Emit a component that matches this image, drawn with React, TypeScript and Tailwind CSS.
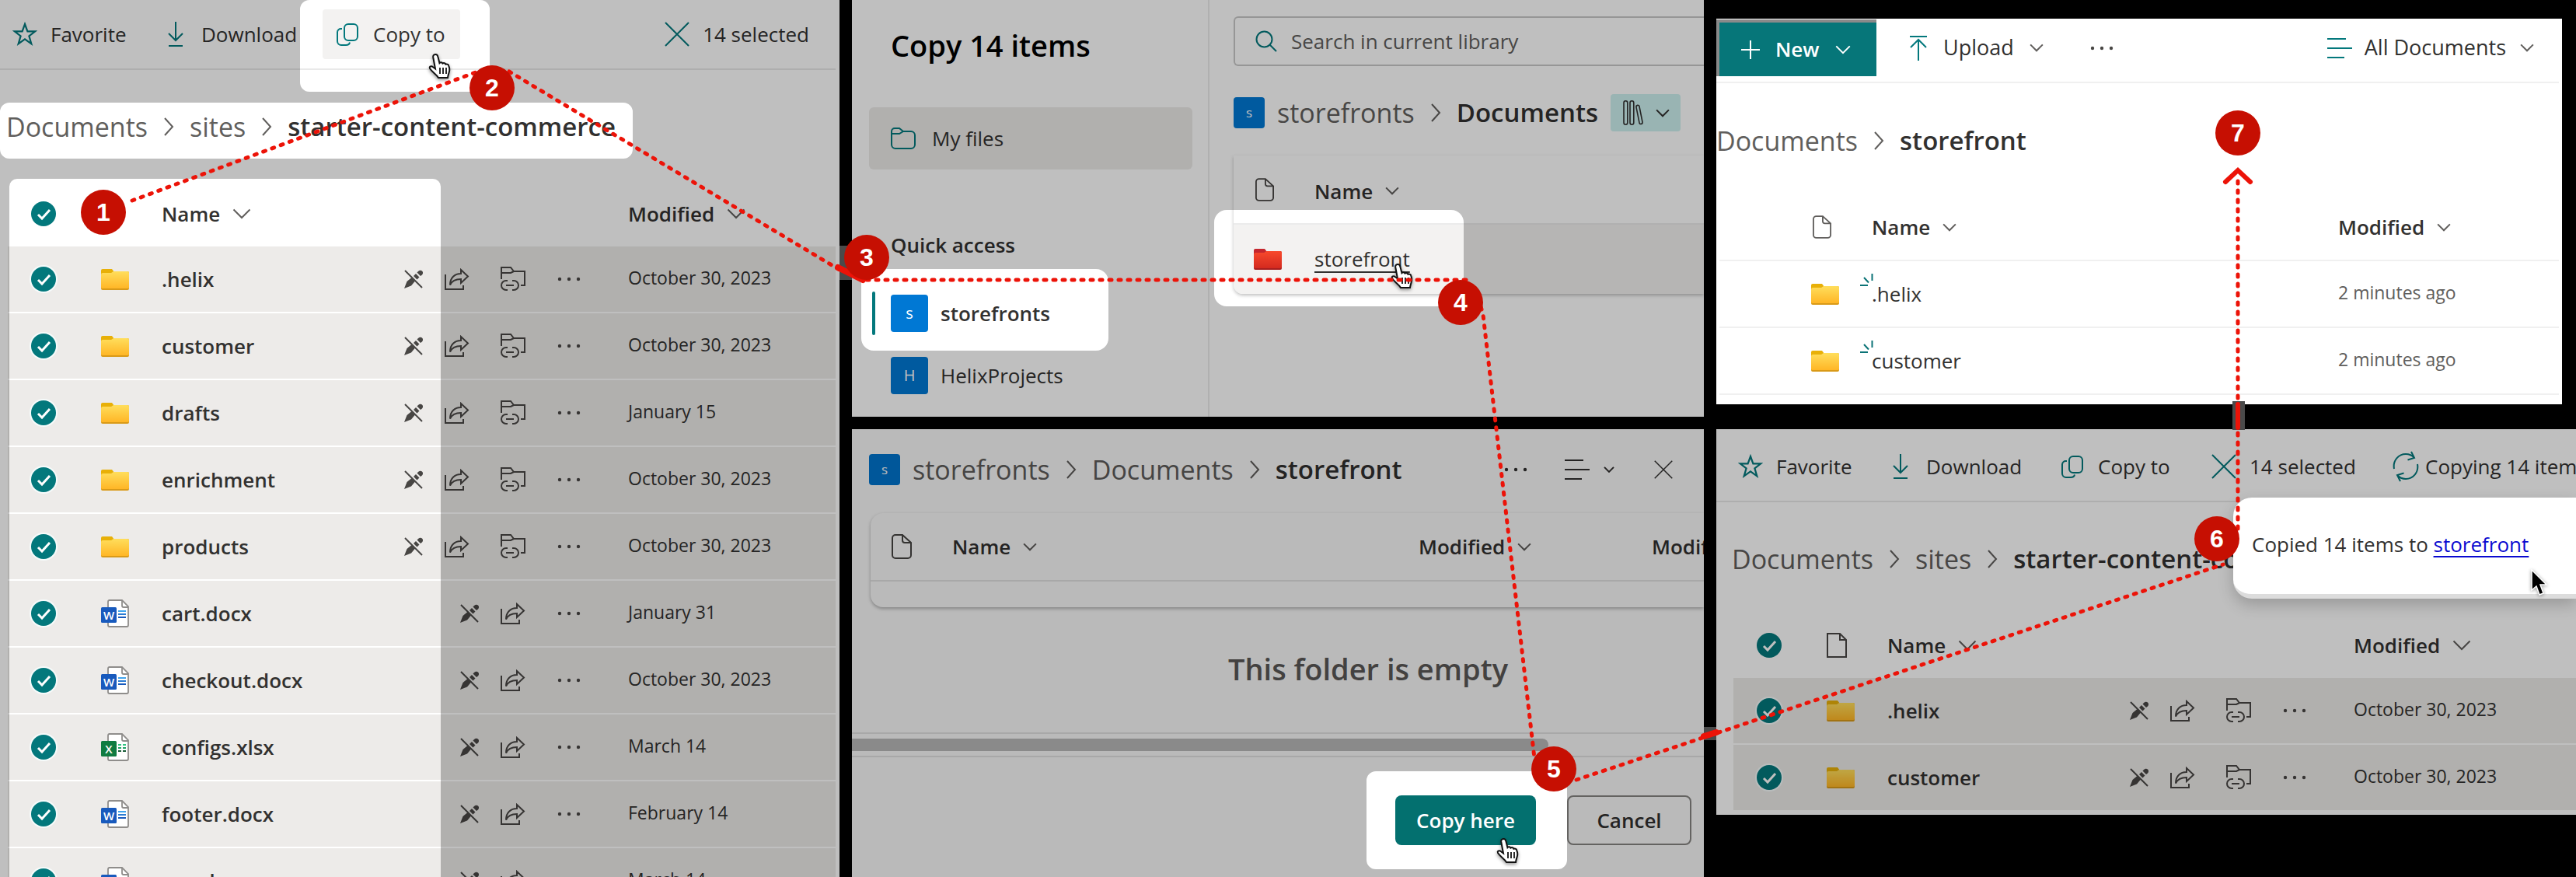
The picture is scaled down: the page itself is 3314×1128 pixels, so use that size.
import React from "react";

type IconProps = { className?: string };

/* ---------- icons ---------- */

const stroke = {
  fill: "none",
  stroke: "currentColor",
  strokeWidth: 2,
} as const;

function StarIcon({ className = "" }: IconProps) {
  return (
    <svg viewBox="0 0 32 32" className={className} {...stroke}>
      <path d="M16 3l3.400 9.300h9.800l-7.800 6 2.900 10L16 22.400 7.700 28.300l2.900-10-7.800-6h9.800z" strokeWidth="2.200" />
    </svg>
  );
}
function DownloadIcon({ className = "" }: IconProps) {
  return (
    <svg viewBox="0 0 32 32" className={className} {...stroke}>
      <path d="M16 0v24M7 15l9 9 9-9M7 31h18" />
    </svg>
  );
}
function UploadIcon({ className = "" }: IconProps) {
  return (
    <svg viewBox="0 0 32 32" className={className} {...stroke}>
      <path d="M16 32V5M6 15l10-10 10 10M5 1h22" />
    </svg>
  );
}
function CopyIcon({ className = "" }: IconProps) {
  return (
    <svg viewBox="0 0 32 32" className={className} {...stroke}>
      <rect x="12" y="3" width="17" height="21" rx="5" />
      <path d="M9 9H8a4.500 4.500 0 0 0-5 4.500V25a5 5 0 0 0 5 5h6c3 0 4.500-1 5-3.500" />
    </svg>
  );
}
function CloseIcon({ className = "" }: IconProps) {
  return (
    <svg viewBox="0 0 32 32" className={className} {...stroke}>
      <path d="M1 1l30 30M31 1L1 31" />
    </svg>
  );
}
function SyncIcon({ className = "" }: IconProps) {
  return (
    <svg viewBox="0 0 34 40" className={className} {...stroke}>
      <path d="M2 23C0 12 8 4 17 4c4 0 8 1.500 11 5M24 1l4 8-8.500 2.500" />
      <path d="M32 17c2 11-6 19-15 19-4 0-8-1.500-11-5M10 39l-4-8 8.500-2.500" />
    </svg>
  );
}
function SearchIcon({ className = "" }: IconProps) {
  return (
    <svg viewBox="0 0 28 28" className={className} {...stroke}>
      <circle cx="11.500" cy="11.500" r="10" />
      <path d="M18.500 18.500L27 27" />
    </svg>
  );
}
function ChevronDown({ className = "" }: IconProps) {
  return (
    <svg viewBox="0 0 24 14" className={className} {...stroke}>
      <path d="M1.500 1.500L12 12 22.500 1.500" vectorEffect="non-scaling-stroke" />
    </svg>
  );
}
function ChevronRight({ className = "" }: IconProps) {
  return (
    <svg viewBox="0 0 14 24" className={className} {...stroke}>
      <path d="M2 1l10 11L2 23" vectorEffect="non-scaling-stroke" />
    </svg>
  );
}
function ListIcon({ className = "" }: IconProps) {
  return (
    <svg viewBox="0 0 32 28" className={className} {...stroke}>
      <path d="M0 2h24M0 14h32M0 26h22" />
    </svg>
  );
}
function DotsIcon({ className = "" }: IconProps) {
  return (
    <svg viewBox="0 0 30 8" className={className} fill="currentColor">
      <circle cx="3" cy="4" r="2.200" />
      <circle cx="15" cy="4" r="2.200" />
      <circle cx="27" cy="4" r="2.200" />
    </svg>
  );
}
function PlusIcon({ className = "" }: IconProps) {
  return (
    <svg viewBox="0 0 24 24" className={className} {...stroke}>
      <path d="M12 0v24M0 12h24" />
    </svg>
  );
}
function DocIcon({ className = "" }: IconProps) {
  return (
    <svg viewBox="0 0 26 32" className={className} {...stroke}>
      <path d="M5 1h9l11 10v16a4 4 0 0 1-4 4H5a4 4 0 0 1-4-4V5a4 4 0 0 1 4-4zM14 1v7a3 3 0 0 0 3 3h8" />
    </svg>
  );
}
function SheetIcon({ className = "" }: IconProps) {
  return (
    <svg viewBox="0 0 26 32" className={className} {...stroke}>
      <path d="M1 1h16l8 8v22H1zM17 1v8h8" />
    </svg>
  );
}
function OutlineFolder({ className = "" }: IconProps) {
  return (
    <svg viewBox="0 0 32 28" className={className} {...stroke}>
      <path d="M1 8V5a4 4 0 0 1 4-4h6l5 4h10a5 5 0 0 1 5 5v12a5 5 0 0 1-5 5H6a5 5 0 0 1-5-5zM1 8h10l5-3" />
    </svg>
  );
}
function BooksIcon({ className = "" }: IconProps) {
  return (
    <svg viewBox="0 0 34 40" className={className} {...stroke}>
      <rect x="2" y="1" width="6" height="38" rx="3" />
      <rect x="12" y="1" width="6" height="38" rx="3" />
      <path d="M22 11c-.5-3.500 4.500-4.200 5-1l5 25c.5 3.500-4.500 4.500-5 1z" />
    </svg>
  );
}
function PencilOff({ className = "" }: IconProps) {
  return (
    <svg viewBox="0 0 24 24" className={className}>
      <path
        d="M0 24l3.500-9 6-5 4.500 4.500-5 6zM12 8l3-3 4.500 4.500-3 3zM16.500 3.500L18 2c4-3.500 8 1 5 4.500l-2 1.500z"
        fill="currentColor"
      />
      <path d="M1 1l22 22" stroke="currentColor" strokeWidth="2" />
    </svg>
  );
}
function ShareIcon({ className = "" }: IconProps) {
  return (
    <svg viewBox="0 0 32 28" className={className} {...stroke}>
      <path d="M1 8v19h23v-5" />
      <path d="M21 2l9 8.500-9 8.500v-5C13 14 9 17 7 21.500 7 12 13 7 21 7z" />
    </svg>
  );
}
function FolderLink({ className = "" }: IconProps) {
  return (
    <svg viewBox="0 0 32 32" className={className} {...stroke}>
      <path d="M1 16V1h12l4 5h14v18h-5M1 8h12l4-2" />
      <path d="M9 18H7a6 6 0 0 0 0 12h2M15 18h2a6 6 0 0 1 0 12h-2M7 24h10" />
    </svg>
  );
}
function Folder({ tone = "yellow" }: { tone?: "yellow" | "red" }) {
  const id = "folder-" + tone;
  const [back, top, bottom, base] =
    tone === "yellow"
      ? ["#e8b008", "#ffde5c", "#ffb626", "#d99a18"]
      : ["#c4262e", "#f8492c", "#d42a1f", "#a81e1e"];
  return (
    <svg viewBox="0 0 36 27" className="block h-[27px] w-9">
      <defs>
        <linearGradient id={id} x1="0" y1="0" x2="0" y2="1">
          <stop offset="0" stopColor={top} />
          <stop offset="1" stopColor={bottom} />
        </linearGradient>
      </defs>
      <path d="M2 0h12l3 4v6H0V2a2 2 0 0 1 2-2z" fill={back} />
      <path d="M0 7q0-2 2-2h11l3-2h18q2 0 2 2v20q0 2-2 2H2q-2 0-2-2z" fill={base} />
      <path d="M0 7q0-2 2-2h11l3-2h18q2 0 2 2v19q0 1-2 1H2q-2 0-2-1z" fill={`url(#${id})`} />
    </svg>
  );
}
function OfficeFile({ kind }: { kind: "word" | "excel" }) {
  return (
    <svg viewBox="0 0 36 36" className="block h-9 w-9">
      <path d="M10 1h17l8 8v24a2 2 0 0 1-2 2H11a2 2 0 0 1-2-2V3q0-2 2-2z" fill="#fff" stroke="#8f8d8b" strokeWidth="1.800" />
      <path d="M27 1v7q0 2 2 2h6" fill="none" stroke="#8f8d8b" strokeWidth="1.800" />
      {kind === "word" ? (
        <g strokeWidth="2">
          <path d="M22 15h10" stroke="#41a5ee" />
          <path d="M22 19h10" stroke="#2b7cd3" />
          <path d="M22 23h10" stroke="#185abd" />
        </g>
      ) : (
        <g strokeWidth="2" strokeDasharray="4 2">
          <path d="M22 15h10" stroke="#33c481" />
          <path d="M22 19h10" stroke="#21a366" />
          <path d="M22 23h10" stroke="#185c37" />
        </g>
      )}
      <rect x="0" y="10" width="20" height="20" rx="1.500" fill={kind === "word" ? "#185abd" : "#107c41"} />
      <text x="10" y="25.500" textAnchor="middle" fontSize="15" fontWeight="600" fill="#fff">
        {kind === "word" ? "W" : "X"}
      </text>
    </svg>
  );
}
function Sparkle() {
  return (
    <svg viewBox="0 0 17 16" className="absolute -left-[15px] -top-2 h-4 w-[17px]" stroke="#0b7376" strokeWidth="2">
      <path d="M0 15h10M5 5l6 6.500M15.500 0v9" />
    </svg>
  );
}
function HandCursor({ className = "" }: IconProps) {
  return (
    <svg viewBox="0 0 32 34" className={"absolute h-[34px] w-8 drop-shadow-[0_2px_2px_rgba(0,0,0,0.4)] " + className}>
      <path
        d="M10 2c2-.2 3 1 3.400 3l2 8c1-1.200 3.200-1 4 .6 1.500-1 3.500-.4 4 1.200 2-.6 3.600.3 4 2.200l.8 3c.8 4-1.700 6.500-2.200 12H14C11.500 27.500 6 25 3 20c-1-2 1-3.500 3-2.500l4 3L7.200 5.500C6.900 3.500 8 2.200 10 2z"
        fill="#fff"
        stroke="#111"
        strokeWidth="2"
      />
      <path d="M16 19v8M20 19v8M24 19v8" stroke="#111" strokeWidth="1.800" />
    </svg>
  );
}

/* ---------- shared parts ---------- */

function ToolButton({ icon, label, className = "" }: { icon: React.ReactNode; label: string; className?: string }) {
  return (
    <button type="button" className={"flex shrink-0 items-center gap-[17px] whitespace-nowrap text-left text-[26px] " + className}>
      <span className="flex w-8 shrink-0 justify-center text-[#03787c]">{icon}</span>
      {label}
    </button>
  );
}

function Breadcrumb({ path, current, className = "" }: { path: string[]; current: string; className?: string }) {
  return (
    <nav aria-label="Breadcrumb" className={"flex items-center gap-5 whitespace-nowrap leading-[44px] " + className}>
      {path.map((p) => (
        <React.Fragment key={p}>
          <a href="#" className="text-[34px] text-[#605e5c]">{p}</a>
          <ChevronRight className="h-6 w-[14px] shrink-0 text-[#605e5c]" />
        </React.Fragment>
      ))}
      <a href="#" aria-current="page" className="text-[33px] font-semibold">{current}</a>
    </nav>
  );
}

function SortHeader({ label, small = false }: { label: string; small?: boolean }) {
  return (
    <button type="button" className="flex items-center gap-4 text-[26px] font-semibold leading-9">
      {label}
      <ChevronDown className={small ? "h-[11px] w-[18px] text-[#605e5c]" : "h-[14px] w-6 text-[#605e5c]"} />
    </button>
  );
}

function Check({ label, ring = false }: { label: string; ring?: boolean }) {
  return (
    <label className="relative ml-[30px] block h-8 w-8">
      <input
        type="checkbox"
        defaultChecked
        aria-label={label}
        className={
          "block h-8 w-8 appearance-none rounded-full bg-[#03787c] " + (ring ? "ring-2 ring-[#f6fbfb]" : "")
        }
      />
      <svg viewBox="0 0 32 32" className="pointer-events-none absolute inset-0" fill="none" stroke="#fff" strokeWidth="3">
        <path d="M9 17l5 5 10-11" />
      </svg>
    </label>
  );
}

function SiteTile({ letter, className = "" }: { letter: string; className?: string }) {
  return (
    <span className={"flex shrink-0 items-center justify-center rounded bg-[#0078d4] text-white " + className}>{letter}</span>
  );
}

type FileItem = { name: string; kind: "folder" | "word" | "excel"; date: string };

function Action({ label, wide = true, children }: { label: string; wide?: boolean; children: React.ReactNode }) {
  return (
    <button type="button" aria-label={label} className={"flex justify-center text-[#484644] " + (wide ? "w-[72px]" : "w-10")}>
      {children}
    </button>
  );
}

function FileTable({ files, iconHeader, headClass }: { files: FileItem[]; iconHeader: boolean; headClass: string }) {
  return (
    <table className="w-full table-fixed border-separate border-spacing-0 text-left">
      <colgroup>
        <col className="w-[120px]" />
        <col className="w-[78px]" />
        <col className="w-[292px]" />
        <col className="w-[308px]" />
        <col />
      </colgroup>
      <thead>
        <tr>
          <th className={headClass}><Check label="Select all" /></th>
          <th className={headClass}>{iconHeader && <SheetIcon className="h-8 w-[26px] text-[#484644]" />}</th>
          <th className={headClass}><SortHeader label="Name" /></th>
          <th className={headClass} />
          <th className={headClass}><SortHeader label="Modified" /></th>
        </tr>
      </thead>
      <tbody>
        {files.map((f) => (
          <tr key={f.name} className="[&>td]:h-[86px] [&>td]:border-b-2 [&>td]:border-white [&>td]:bg-[#edebe9] [&>td]:align-middle">
            <td><Check label={f.name} ring /></td>
            <td>{f.kind === "folder" ? <Folder /> : <OfficeFile kind={f.kind} />}</td>
            <td className="text-[26px] font-semibold leading-9">{f.name}</td>
            <td>
              <div className="flex items-center justify-end pr-10">
                <Action label="Editing off" wide={false}><PencilOff className="h-6 w-6" /></Action>
                <Action label="Share"><ShareIcon className="h-7 w-8" /></Action>
                {f.kind === "folder" && <Action label="Add shortcut"><FolderLink className="h-8 w-8" /></Action>}
                <Action label="More"><DotsIcon className="h-2 w-[30px]" /></Action>
              </div>
            </td>
            <td className="pb-1 text-[23px] leading-8">{f.date}</td>
          </tr>
        ))}
      </tbody>
    </table>
  );
}

const files: FileItem[] = [
  { name: ".helix", kind: "folder", date: "October 30, 2023" },
  { name: "customer", kind: "folder", date: "October 30, 2023" },
  { name: "drafts", kind: "folder", date: "January 15" },
  { name: "enrichment", kind: "folder", date: "October 30, 2023" },
  { name: "products", kind: "folder", date: "October 30, 2023" },
  { name: "cart.docx", kind: "word", date: "January 31" },
  { name: "checkout.docx", kind: "word", date: "October 30, 2023" },
  { name: "configs.xlsx", kind: "excel", date: "March 14" },
  { name: "footer.docx", kind: "word", date: "February 14" },
  { name: "nav.docx", kind: "word", date: "March 14" },
];

/* ---------- panels ---------- */

function SourcePanel() {
  return (
    <section className="relative overflow-hidden bg-white">
      <div className="mr-[5px] flex h-[90px] items-center border-b-2 border-[#e9e9e9] pl-4 pr-[34px]">
        <ToolButton icon={<StarIcon className="h-8 w-8" />} label="Favorite" className="w-[194px]" />
        <ToolButton icon={<DownloadIcon className="h-8 w-8" />} label="Download" className="w-[205px]" />
        <ToolButton
          icon={<CopyIcon className="h-8 w-8" />}
          label="Copy to"
          className="h-16 w-[177px] rounded bg-[#f3f2f1] px-4"
        />
        <ToolButton icon={<CloseIcon className="h-8 w-8" />} label="14 selected" className="ml-auto" />
      </div>
      <Breadcrumb path={["Documents", "sites"]} current="starter-content-commerce" className="mt-[51px] pl-2" />
      <div className="ml-[10px] mr-[5px] mt-[48px]">
        <FileTable files={files} iconHeader={false} headClass="h-[84px]" />
      </div>
      <HandCursor className="left-[550px] top-[68px]" />
    </section>
  );
}

function PickerPanel() {
  return (
    <section className="relative flex h-[536px] overflow-hidden bg-white">
      <aside className="w-[460px] shrink-0 border-r-2 border-[#ebebeb] pl-[22px] pr-5">
        <h2 className="mt-[33px] pl-7 text-[38px] font-semibold leading-[50px] text-black">Copy 14 items</h2>
        <a href="#" className="mt-[55px] flex h-20 items-center gap-[21px] rounded-md bg-[#edebe9] pl-7 text-[26px]">
          <OutlineFolder className="h-7 w-8 text-[#03787c]" />
          My files
        </a>
        <h3 className="mt-[79px] pl-7 text-[26px] font-semibold leading-9">Quick access</h3>
        <a href="#" className="mt-[42px] flex h-14 items-center text-[26px] font-semibold">
          <span className="ml-1 mr-5 h-14 w-1 shrink-0 rounded bg-[#03787c]" />
          <SiteTile letter="s" className="h-12 w-12 text-[20px] font-normal" />
          <span className="ml-4">storefronts</span>
        </a>
        <a href="#" className="mt-6 flex h-14 items-center gap-4 pl-7 text-[26px]">
          <SiteTile letter="H" className="h-12 w-12 text-[20px]" />
          HelixProjects
        </a>
      </aside>
      <div className="min-w-0 flex-1 pl-[31px]">
        <label className="mt-[21px] flex h-16 items-center gap-[18px] rounded-l-md border-2 border-r-0 border-[#c8c8c8] pl-[26px]">
          <SearchIcon className="h-7 w-7 shrink-0 text-[#03787c]" />
          <input
            type="text"
            aria-label="Search"
            placeholder="Search in current library"
            className="min-w-0 flex-1 bg-transparent text-[26px] outline-none placeholder:text-[#605e5c] placeholder:opacity-100"
          />
        </label>
        <div className="mt-9 flex h-12 items-center">
          <SiteTile letter="s" className="h-10 w-10 text-[17px]" />
          <Breadcrumb path={["storefronts"]} current="Documents" className="ml-4" />
          <button type="button" aria-label="Choose library" className="ml-4 flex h-12 w-[90px] shrink-0 items-center gap-3 rounded bg-[#cdf0ef] pl-3">
            <BooksIcon className="h-8 w-[34px]" />
            <ChevronDown className="h-[11px] w-[18px]" />
          </button>
        </div>
        <div className="mt-[31px] h-[178px] overflow-hidden rounded-bl-xl shadow-[0_2px_4px_rgba(0,0,0,0.25)]">
          <table className="w-full table-fixed border-separate border-spacing-0 text-left">
            <colgroup>
              <col className="w-[104px]" />
              <col />
            </colgroup>
            <thead>
              <tr>
                <th className="h-[89px] border-b-2 border-[#ebebeb] pl-7"><DocIcon className="h-8 w-6 text-[#484644]" /></th>
                <th className="h-[89px] border-b-2 border-[#ebebeb] pt-1"><SortHeader label="Name" small /></th>
              </tr>
            </thead>
            <tbody>
              <tr className="bg-[#f3f2f1]">
                <td className="h-[89px] pl-[26px]"><Folder tone="red" /></td>
                <td className="h-[89px]">
                  <a href="#" className="text-[26px] underline decoration-2 underline-offset-[6px]">storefront</a>
                </td>
              </tr>
            </tbody>
          </table>
        </div>
      </div>
      <HandCursor className="left-[692px] top-[338px]" />
    </section>
  );
}

function DestinationPanel() {
  return (
    <section className="relative flex flex-1 flex-col overflow-hidden bg-white">
      <div className="mt-6 flex h-14 items-center pl-[22px] pr-10">
        <SiteTile letter="s" className="h-10 w-10 text-[17px]" />
        <Breadcrumb path={["storefronts", "Documents"]} current="storefront" className="ml-4" />
        <button type="button" aria-label="More" className="ml-auto"><DotsIcon className="h-2 w-[30px]" /></button>
        <button type="button" aria-label="View options" className="ml-12 flex items-center gap-[18px]">
          <ListIcon className="h-7 w-8" />
          <ChevronDown className="h-2 w-[14px]" />
        </button>
        <button type="button" aria-label="Close" className="ml-[51px]"><CloseIcon className="h-6 w-6" /></button>
      </div>
      <div className="ml-6 mt-7 h-[121px] shrink-0 overflow-hidden rounded-l-2xl shadow-[0_2px_4px_rgba(0,0,0,0.3)]">
        <table className="w-full table-fixed border-separate border-spacing-0 text-left">
          <colgroup>
            <col className="w-[105px]" />
            <col />
            <col className="w-[300px]" />
            <col className="w-[67px]" />
          </colgroup>
          <thead>
            <tr className="[&>th]:h-[88px] [&>th]:border-b-2 [&>th]:border-[#e6e6e6]">
              <th className="pl-[27px]"><DocIcon className="h-8 w-[26px] text-[#484644]" /></th>
              <th><SortHeader label="Name" small /></th>
              <th><SortHeader label="Modified" small /></th>
              <th className="overflow-hidden whitespace-nowrap text-[26px] font-semibold">Modified By</th>
            </tr>
          </thead>
        </table>
      </div>
      <p className="mt-[55px] pl-[232px] text-center text-[38px] font-semibold leading-[48px] text-[#5c5a58]">This folder is empty</p>
      <div className="mt-[58px] flex h-8 shrink-0 items-center border-y-2 border-[#e6e6e6]">
        <div className="h-4 w-[896px] rounded-r-lg bg-[#bdbdbd]" />
      </div>
      <div className="mt-[49px] flex justify-end gap-10 pr-4">
        <button type="button" className="h-16 w-[181px] rounded-lg bg-[#03706f] text-[26px] font-semibold text-white">Copy here</button>
        <button type="button" className="h-16 w-[160px] rounded-lg border-2 border-[#8a8886] text-[26px] font-semibold">Cancel</button>
      </div>
      <HandCursor className="left-[828px] top-[525px]" />
    </section>
  );
}

function ResultPanel() {
  const cell = "border-b-2 border-[#f0f0f0]";
  return (
    <section className="mr-[18px] mt-6 h-[496px] overflow-hidden bg-white">
      <div className="mr-1 flex h-[83px] items-center border-b-2 border-[#f0f0f0] pb-[6px] pr-8">
        <button
          type="button"
          className="flex h-[73px] w-[206px] items-center border-l-4 border-t-4 border-[#8a8a8a] bg-[#067679] pl-7 text-[26px] font-semibold text-white"
        >
          <PlusIcon className="mr-5 h-6 w-6" />
          New
          <ChevronDown className="ml-5 h-3 w-5" />
        </button>
        <button type="button" className="ml-[38px] flex items-center text-[27px]">
          <UploadIcon className="mr-4 h-8 w-8 text-[#03787c]" />
          Upload
          <ChevronDown className="ml-5 h-[11px] w-[18px] text-[#605e5c]" />
        </button>
        <button type="button" aria-label="More" className="ml-[60px]"><DotsIcon className="h-2 w-[30px] text-[#484644]" /></button>
        <button type="button" className="ml-auto flex items-center text-[27px]">
          <ListIcon className="mr-4 h-7 w-8 text-[#03787c]" />
          All Documents
          <ChevronDown className="ml-[18px] h-[11px] w-[18px] text-[#605e5c]" />
        </button>
      </div>
      <Breadcrumb path={["Documents"]} current="storefront" className="mt-[52px]" />
      <div className="mx-1 mt-[47px]">
        <table className="w-full table-fixed border-separate border-spacing-0 text-left">
          <colgroup>
            <col className="w-[196px]" />
            <col />
            <col className="w-[284px]" />
          </colgroup>
          <thead>
            <tr className="[&>th]:h-[86px]">
              <th className={cell + " pl-[120px]"}><DocIcon className="h-8 w-6 text-[#605e5c]" /></th>
              <th className={cell}><SortHeader label="Name" small /></th>
              <th className={cell}><SortHeader label="Modified" small /></th>
            </tr>
          </thead>
          <tbody>
            {[".helix", "customer"].map((n) => (
              <tr key={n} className="[&>td]:h-[86px]">
                <td className={cell + " pl-[118px]"}><Folder /></td>
                <td className={cell}>
                  <a href="#" className="relative block text-[26px] leading-9">
                    <Sparkle />
                    {n}
                  </a>
                </td>
                <td className={cell + " pb-1 text-[23px] leading-8 text-[#605e5c]"}>2 minutes ago</td>
              </tr>
            ))}
          </tbody>
        </table>
      </div>
    </section>
  );
}

function ProgressPanel() {
  return (
    <section className="relative mt-8 h-[496px]">
      <div className="h-full overflow-hidden bg-white">
        <div className="flex h-[94px] items-center border-b-2 border-[#e9e9e9] pl-7 pt-1">
          <ToolButton icon={<StarIcon className="h-8 w-8" />} label="Favorite" className="w-[193px]" />
          <ToolButton icon={<DownloadIcon className="h-8 w-8" />} label="Download" className="w-[221px]" />
          <ToolButton icon={<CopyIcon className="h-8 w-8" />} label="Copy to" className="w-[195px]" />
          <ToolButton icon={<CloseIcon className="h-8 w-8" />} label="14 selected" className="w-[233px]" />
          <div className="flex items-center gap-2 whitespace-nowrap text-[26px]">
            <SyncIcon className="h-10 w-[34px] shrink-0 text-[#03787c]" />
            Copying 14 items...
          </div>
        </div>
        <Breadcrumb path={["Documents", "sites"]} current="starter-content-commerce" className="mt-[51px] pl-5" />
        <div className="ml-[22px] mt-[47px]">
          <FileTable files={files.slice(0, 2)} iconHeader headClass="h-[84px]" />
        </div>
      </div>
      <div
        role="status"
        className="absolute left-[665px] right-0 top-[88px] z-20 flex h-[130px] items-center rounded-l-3xl border-b-[6px] border-[#dcdcdc] bg-white pb-1 pl-6 text-[26px] whitespace-nowrap shadow-[0_8px_20px_rgba(0,0,0,0.2)]"
      >
        <span>
          Copied 14 items to{" "}
          <a href="#" className="text-[#0a0ad0] underline decoration-2 underline-offset-[5px]">storefront</a>
        </span>
        <svg viewBox="0 0 22 36" className="absolute right-9 top-[92px] h-9 w-[22px] drop-shadow-[0_1px_2px_rgba(0,0,0,0.4)]">
          <path d="M1 1v26l6-5 4 11 5-2-4-11h8z" fill="#000" stroke="#fff" strokeWidth="1.500" />
        </svg>
      </div>
    </section>
  );
}

/* ---------- tour overlay ---------- */

const box = (x: number, y: number, w: number, h: number, r = 0) =>
  `M${x + r} ${y}h${w - 2 * r}a${r} ${r} 0 0 1 ${r} ${r}v${h - 2 * r}a${r} ${r} 0 0 1 ${-r} ${r}h${-(w - 2 * r)}a${r} ${r} 0 0 1 ${-r} ${-r}v${-(h - 2 * r)}a${r} ${r} 0 0 1 ${r} ${-r}z`;

const steps: [number, number][] = [
  [133, 273],
  [633, 113],
  [1115, 331],
  [1879, 389],
  [1999, 989],
  [2852, 693],
  [2879, 171],
];

function Shade() {
  return (
    <svg viewBox="0 0 3314 1128" preserveAspectRatio="none" className="pointer-events-none absolute inset-0 z-10 h-full w-full" fillRule="evenodd">
      <path
        fillOpacity=".25"
        d={box(0, 0, 1080, 1140) + box(386, 0, 244, 118, 12) + box(0, 132, 814, 72, 12) + box(12, 230, 555, 920, 10)}
      />
      <path fillOpacity=".25" d={box(1096, 0, 1096, 536) + box(1108, 346, 318, 105, 16) + box(1562, 270, 321, 124, 16)} />
      <path fillOpacity=".27" d={box(1096, 552, 1096, 576) + box(1758, 992, 258, 126, 12)} />
      <path fillOpacity=".25" d={box(2208, 552, 1106, 496)} />
    </svg>
  );
}

function Route() {
  return (
    <svg viewBox="0 0 3314 1128" preserveAspectRatio="none" className="pointer-events-none absolute inset-0 z-30 h-full w-full" fill="none">
      <g fill="#4a4a4a">
        <rect x="1080" y="316" width="16" height="44" />
        <rect x="2192" y="935" width="16" height="17" />
        <rect x="2872" y="516" width="16" height="37" />
      </g>
      <g stroke="#ec1308" strokeWidth="5" strokeLinecap="round" strokeDasharray="3 9">
        <path d="M170 258L620 90" />
        <path d="M655 92L1085 350" />
        <path d="M1115 360H1890" />
        <path d="M1899 372L1908 405L1974 975" />
        <path d="M2028 1003L2860 726" />
        <path d="M2879 680V228" />
      </g>
      <g stroke="#ec1308" strokeWidth="6" strokeLinecap="round">
        <path d="M1078 344L1110 360" strokeWidth="8" />
        <path d="M2192 947L2208 942" strokeWidth="8" />
        <path d="M2879 520V550" />
        <path d="M2863 234L2879 219L2895 234" />
      </g>
      {steps.map(([x, y], i) => (
        <g key={i}>
          <circle cx={x} cy={y} r="29" fill="#c60f02" />
          <text x={x} y={y + 11} textAnchor="middle" fill="#fff" fontSize="32" fontWeight="700" fontFamily="'Liberation Sans', sans-serif">
            {i + 1}
          </text>
        </g>
      ))}
    </svg>
  );
}

export default function App() {
  return (
    <main className="relative grid h-screen grid-cols-[minmax(0,540fr)_minmax(0,548fr)_minmax(0,553fr)] grid-rows-[minmax(0,1fr)] gap-4 overflow-hidden bg-black font-['Open_Sans','Noto_Sans',sans-serif] text-[#323130]">
      <SourcePanel />
      <div className="flex flex-col gap-4">
        <PickerPanel />
        <DestinationPanel />
      </div>
      <div>
        <ResultPanel />
        <ProgressPanel />
      </div>
      <Shade />
      <Route />
    </main>
  );
}
